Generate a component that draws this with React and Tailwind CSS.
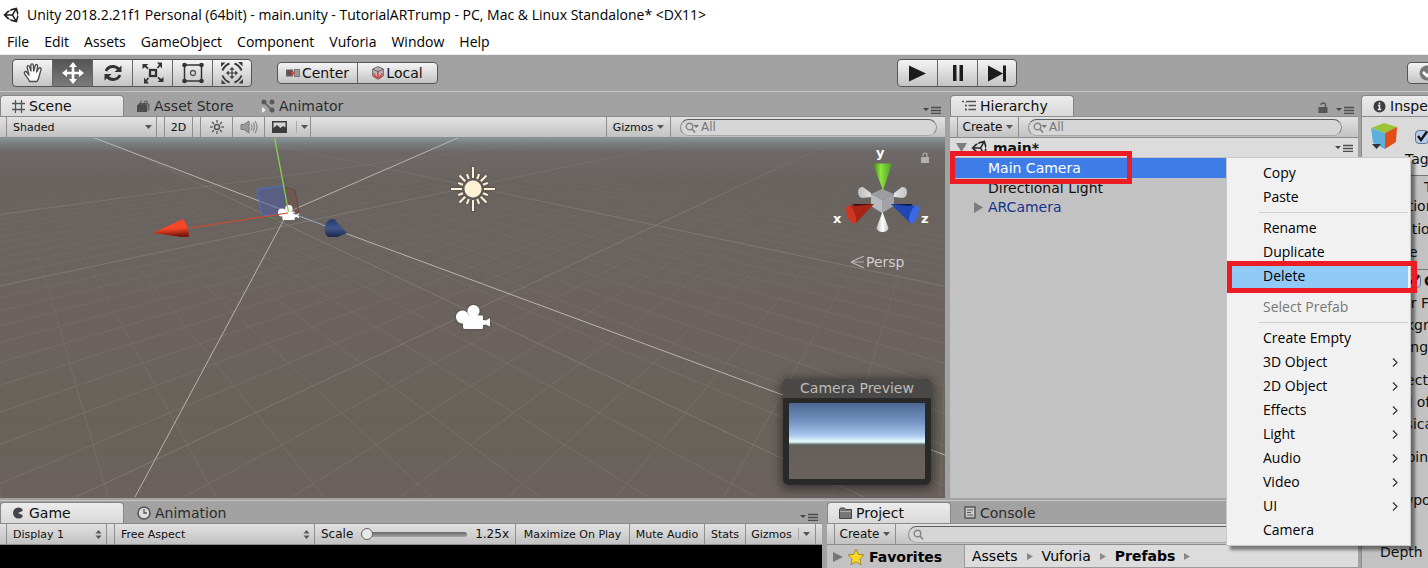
import React from 'react';
import { FaUnity } from 'react-icons/fa';

const UI = 'font-["DejaVu_Sans",Verdana,sans-serif]';

function Caret({ className = '' }) {
  return (
    <svg className={`h-1 w-[7px] shrink-0 ${className}`} viewBox="0 0 7 4" aria-hidden="true">
      <path d="M0 0h7L3.500 4z" fill="#555" />
    </svg>
  );
}

function PanelMenu({ className = '' }) {
  return (
    <button type="button" aria-label="Panel options" className={`flex shrink-0 ${className}`}>
      <svg width="18" height="8" viewBox="0 0 18 8">
        <path d="M0 2h6L3 5z" fill="#444" />
        <path d="M8 1.500h10M8 4.500h10M8 7.500h10" stroke="#4c4c4c" strokeWidth="1.300" />
      </svg>
    </button>
  );
}

function Lock({ className = '', color = '#555' }) {
  return (
    <svg className={className} width="10" height="11" viewBox="0 0 10 11" aria-hidden="true">
      <path d="M3 3V2.500Q3 1 5.200 1T7.500 3v3" fill="none" stroke={color} strokeWidth="1.300" />
      <rect x="0.500" y="5" width="9" height="6" fill={color} />
    </svg>
  );
}

function Tab({ active, icon, children }) {
  return (
    <button
      type="button"
      role="tab"
      aria-selected={!!active}
      className={`flex h-[21px] w-[124px] shrink-0 items-center gap-1 whitespace-nowrap text-left text-[14px] leading-none ${
        active
          ? 'rounded-t border border-b-0 border-[#868686] bg-gradient-to-b from-[#ececec] to-[#d9d9d9] pl-[11px] text-[#111]'
          : 'border-l border-transparent pl-3 text-[#2c2c2c]'
      }`}
    >
      {icon}
      {children}
    </button>
  );
}

function Strip({ children }) {
  return (
    <div className="flex h-[22px] shrink-0 items-stretch border-y border-[#8c8c8c] bg-gradient-to-b from-[#e2e2e2] to-[#c2c2c2] text-[11px] leading-none text-[#111]">
      {children}
    </div>
  );
}

const cell = 'flex shrink-0 items-center justify-center border-r border-[#8e8e8e] whitespace-nowrap';

function Search({ label, placeholder, className = '', arrow }) {
  return (
    <label className={`flex h-[17px] items-center gap-[2px] self-center rounded-full border border-t-[#5e5e5e] border-x-[#8a8a8a] border-b-[#a8a8a8] bg-[#d6d6d6] pl-1 ${className}`}>
      <svg width="14" height="11" viewBox="0 0 14 11" className="shrink-0" aria-hidden="true">
        <circle cx="4.500" cy="4.500" r="3.300" fill="none" stroke="#858585" strokeWidth="1.400" />
        <path d="M7 7l3 3.500" stroke="#858585" strokeWidth="1.700" />
        {arrow && <path d="M8.500 3H14l-2.750 3z" fill="#777" />}
      </svg>
      <input aria-label={label} placeholder={placeholder} className="mb-px w-full min-w-0 bg-transparent text-[12px] leading-none outline-none placeholder:text-[#777]" />
    </label>
  );
}

function Spinner() {
  return (
    <svg width="7" height="9" viewBox="0 0 7 9" className="pointer-events-none absolute right-1 top-[6px]" aria-hidden="true">
      <path d="M0.500 3.500L3.500 0l3 3.500zM0.500 5.500L3.500 9l3-3.500z" fill="#555" />
    </svg>
  );
}

function Popup({ label, value, className, spinner }) {
  return (
    <div className={`relative shrink-0 border-x border-[#8e8e8e] ${className}`}>
      <select aria-label={label} className="h-full w-full appearance-none bg-transparent pl-[6px] leading-none outline-none">
        <option>{value}</option>
      </select>
      {spinner ? <Spinner /> : <Caret className="pointer-events-none absolute right-1 top-2" />}
    </div>
  );
}

/* ---------- main toolbar ---------- */

const rotations = [0, 90, 180, 270];

const toolIcons = {
  Hand: (
    <path
      d="M7.500 19.500C6.500 16.500 3.500 14 2.500 11.500c-.8-2 1.300-2.800 2.600-1L7 13 5.200 5.500c-.5-2.200 1.800-2.600 2.300-.8L9 9 8.800 3.500c0-2.200 2.400-2.200 2.500 0L11.700 9l1.500-5.300c.6-1.900 2.700-1.300 2.400.6L14.600 10l2.200-3.500c1-1.600 2.900-.5 2.200 1.200-1.200 3-1.500 7.800-4 11.800z"
      fill="#fafafa" stroke="#4b4b4b" strokeWidth="1.300" strokeLinejoin="round"
    />
  ),
  Move: (
    <path d="M11 0l4 5h-2.700v4.700H17V7l5 4-5 4v-2.700h-4.700V17H15l-4 5-4-5h2.700v-4.700H5V15l-5-4 5-4v2.700h4.700V5H7z" fill="#fff" />
  ),
  Rotate: (
    <g fill="none" stroke="#333" strokeWidth="2.800">
      <path d="M4 9Q6 4.500 11 4.500q3.500 0 6 3" /><path d="M18 13q-2 4.500-7 4.500-3.500 0-6-3" />
      <path d="M19.500 3.500V10h-7zM2.500 18.500V12h7z" fill="#333" stroke="none" />
    </g>
  ),
  Scale: (
    <g fill="#333">
      <rect x="8" y="8" width="6" height="6" fill="none" stroke="#333" strokeWidth="2.300" />
      {rotations.map((r) => (
        <g key={r} transform={`rotate(${r} 11 11)`}><path d="M0.500 2h6l-6 5z" /><path d="M3 4l3 2.500" stroke="#333" strokeWidth="1.800" /></g>
      ))}
    </g>
  ),
  Rect: (
    <g fill="#333">
      <rect x="2.500" y="3" width="17" height="16" fill="none" stroke="#333" strokeWidth="1.500" />
      {[2.5, 19.5].map((x) => [3, 19].map((y) => <circle key={`${x}-${y}`} cx={x} cy={y} r="2.300" />))}
      <circle cx="11" cy="11" r="2.500" fill="none" stroke="#555" strokeWidth="1.300" />
    </g>
  ),
  Transform: (
    <g fill="#3a3a3a">
      {rotations.map((r) => (
        <g key={r} transform={`rotate(${r} 11 11)`}>
          <path d="M0 0.500h4.500L0 5z" />
          <path d="M1.500 8.500Q3.500 3.500 8.500 1.500" fill="none" stroke="#3a3a3a" strokeWidth="2" />
          <path d="M11 5l2.500 2.800h-5z" />
        </g>
      ))}
      <path d="M11 6v10M6 11h10" stroke="#3a3a3a" strokeWidth="1.200" />
    </g>
  ),
};

const groupBtn = 'flex h-full items-center justify-center border-r border-[#666] last:border-r-0';
const group = 'flex shrink-0 overflow-hidden rounded border border-[#555] bg-gradient-to-b from-[#f4f4f4] to-[#c4c4c4]';

function MainToolbar() {
  return (
    <div className="flex h-[38px] shrink-0 items-center overflow-hidden border-b border-t border-b-[#c4c4c4] border-t-[#ececec] bg-[#a2a2a2] pl-3">
      <div className={`${group} h-7`}>
        {Object.entries(toolIcons).map(([name, icon]) => (
          <button
            key={name}
            type="button"
            aria-label={`${name} tool`}
            className={`${groupBtn} w-10 last:w-[38px] ${name === 'Move' ? 'bg-gradient-to-b from-[#555] to-[#7b7b7b]' : ''}`}
          >
            <svg width="22" height="22" viewBox="0 0 22 22">{icon}</svg>
          </button>
        ))}
      </div>
      <div className={`${group} ml-[25px] h-[22px] text-[14px] leading-none text-[#111]`}>
        <button type="button" className={`${groupBtn} w-20`}>
          <svg width="14" height="8" viewBox="0 0 14 8" className="mr-[2px]">
            <rect x="0.500" y="1" width="6" height="6" fill="#6b4a4a" stroke="#666" /><rect x="8.500" y="0.500" width="5" height="7" fill="#999" stroke="#777" />
            <circle cx="7" cy="4" r="1.800" fill="#e0444c" />
          </svg>
          Center
        </button>
        <button type="button" className={`${groupBtn} w-[79px]`}>
          <svg width="12" height="14" viewBox="0 0 12 14" className="mr-[2px]">
            <path d="M6 0.700l5.300 2.300v7L6 13.300.7 10V3z" fill="#b5b5b5" stroke="#666" />
            <path d="M1 3.200l5 2.500 5-2.500" fill="none" stroke="#666" />
            <path d="M6 4.500V12M2 7.500q1 4 4 4.500 3-.5 4-4.500" fill="none" stroke="#d8434c" strokeWidth="1.600" />
          </svg>
          Local
        </button>
      </div>
      <div className={`${group} ml-auto mr-[390px] h-7`}>
        <button type="button" aria-label="Play" className={`${groupBtn} w-10`}>
          <svg width="18" height="17" viewBox="0 0 18 17"><path d="M0 0.500l17 8-17 8z" fill="#1c1c1c" /></svg>
        </button>
        <button type="button" aria-label="Pause" className={`${groupBtn} w-10`}>
          <svg width="12" height="16" viewBox="0 0 12 16"><path d="M1 0h3.500v16H1zM7.500 0H11v16H7.500z" fill="#1c1c1c" /></svg>
        </button>
        <button type="button" aria-label="Step" className={`${groupBtn} w-[38px]`}>
          <svg width="20" height="17" viewBox="0 0 20 17"><path d="M1 0.500l15 8-15 8zM16 0.500h3v16h-3z" fill="#1c1c1c" /></svg>
        </button>
      </div>
      <button type="button" aria-label="Collaborate" className={`${group} -mr-[39px] h-[22px] w-[60px] items-center pl-[11px]`}>
        <svg width="18" height="16" viewBox="0 0 18 16"><circle cx="8" cy="8" r="7.500" fill="#777" /><path d="M4 7l4 4 5-6" fill="none" stroke="#fff" strokeWidth="2.500" /></svg>
      </button>
    </div>
  );
}

/* ---------- scene ---------- */

const gridSteps = Array.from({ length: 46 }, (_, i) => i - 22);

function Camcorder({ x, y, s = 1 }) {
  return (
    <g transform={`translate(${x} ${y}) scale(${s})`} fill="#fdfdfd">
      <circle cx="17.500" cy="6" r="6" /><circle cx="6.500" cy="12" r="6.500" />
      <path d="M8 10.500h18q1 0 1 1V15l3 .5 4-2.500v8.500l-4-2-3 .5v2.500q0 1.500-1.500 1.500H9q-2 0-2-2V11z" />
    </g>
  );
}

function SceneDrawing() {
  return (
    <svg className="absolute left-0 top-0" width="1600" height="900" viewBox="0 138 1600 900" aria-hidden="true">
      <defs>
        <linearGradient id="fade" gradientUnits="userSpaceOnUse" x1="0" y1="137" x2="0" y2="400">
          <stop offset="0.030" stopColor="#a09c9a" stopOpacity="0" />
          <stop offset="0.400" stopColor="#a09c9a" stopOpacity="0.080" />
          <stop offset="1" stopColor="#a09c9a" stopOpacity="0.200" />
        </linearGradient>
        <linearGradient id="fadeMajor" gradientUnits="userSpaceOnUse" x1="0" y1="137" x2="0" y2="400">
          <stop offset="0" stopColor="#a8a4a0" stopOpacity="0.050" />
          <stop offset="0.300" stopColor="#a8a4a0" stopOpacity="0.300" />
          <stop offset="1" stopColor="#a8a4a0" stopOpacity="0.300" />
        </linearGradient>
        <linearGradient id="redCone" x1="0" y1="0" x2="0.150" y2="1">
          <stop offset="0.600" stopColor="#f74624" /><stop offset="1" stopColor="#7a190b" />
        </linearGradient>
        <linearGradient id="blueCone" x1="0" y1="0" x2="0" y2="1">
          <stop offset="0" stopColor="#24386a" /><stop offset="0.500" stopColor="#40588f" /><stop offset="1" stopColor="#1c2745" />
        </linearGradient>
        <filter id="halo" x="-30%" y="-30%" width="160%" height="160%">
          <feDropShadow dx="0" dy="0" stdDeviation="1.200" floodColor="#222" floodOpacity="0.600" />
        </filter>
      </defs>
      <g strokeWidth="1" fill="none">
        {gridSteps.map((k) => (
          <path key={`l${k}`} stroke={k % 10 === 0 ? 'url(#fadeMajor)' : 'url(#fade)'} d={`M955 85L${76 + k * 108} 497`} />
        ))}
        {gridSteps.map((k) => (
          <path key={`r${k}`} stroke={(k - 7) % 10 === 0 ? 'url(#fadeMajor)' : 'url(#fade)'} d={`M-10 85L${108 + k * 108} 497`} />
        ))}
      </g>
      <path d="M92 137L288 212L945 455M460 137L288 212L135 497" stroke="#c4c1bd" fill="none" opacity="0.850" />
      <path d="M257 189l27-3 5 27-27 3z" fill="#4c5aa8" fillOpacity="0.500" stroke="#4671c8" />
      <path d="M284 187l11 3 4 23-11-2z" fill="#70443f" fillOpacity="0.350" stroke="#7b4038" />
      <path d="M264 217l11 4 25-5" fill="none" stroke="#53702f" />
      <Camcorder x={278} y={205} s={0.62} />
      <path d="M274.500 137L288.500 212" stroke="#8bd148" strokeWidth="1.300" />
      <path d="M288 213L189 228" stroke="#ce4930" strokeWidth="1.200" />
      <path d="M293 213L347 234" stroke="#5a7ec4" strokeDasharray="3 2" />
      <path d="M153 233l30-14q6 8 6 18l-8 0z" fill="url(#redCone)" />
      <path d="M347 233l-13-14q-10 0-9 12 0 5 4 6h8z" fill="url(#blueCone)" />
      <g filter="url(#halo)">
        <circle cx="473" cy="189" r="8.500" fill="#fdf0d5" />
        <g stroke="#fdf0d5" strokeWidth="2">
          {Array.from({ length: 16 }, (_, i) => (
            <path key={i} d={i % 4 === 0 ? 'M473 178v-11' : i % 2 === 0 ? 'M473 178v-8' : 'M473 178v-5'} transform={`rotate(${i * 22.5} 473 189)`} />
          ))}
        </g>
      </g>
      <g filter="url(#halo)"><Camcorder x={456} y={305} /></g>
    </svg>
  );
}

function AxisGizmo() {
  return (
    <div className="absolute right-2 top-0 w-[110px] text-[#d0cfce]">
      <svg width="110" height="110" viewBox="827 138 110 110" role="img" aria-label="Scene orientation">
        <defs>
          <linearGradient id="gy"><stop offset="0" stopColor="#3e7c18" /><stop offset="0.400" stopColor="#8ce63e" /><stop offset="1" stopColor="#4f9a22" /></linearGradient>
          <linearGradient id="gw"><stop offset="0" stopColor="#bbb" /><stop offset="0.500" stopColor="#fff" /><stop offset="1" stopColor="#c4c4c4" /></linearGradient>
        </defs>
        <path d="M871 193l-8-6q-5 0-5 5 0 5 4 6l9-1zM894 193l8-6q5 0 5 5 0 5-4 6l-9-1z" fill="url(#gw)" />
        <path d="M882 189l12 5-12 6-11-6z" fill="#9b9da1" /><path d="M871 194l11 6v13l-11-7z" fill="#b9babd" /><path d="M894 194l-12 6v13l12-7z" fill="#a2a3a7" />
        <path d="M882.500 212l6 16q-1 4-6 4t-6-4z" fill="url(#gw)" />
        <path d="M873 163.500h19L883.500 189v2h-1v-2z" fill="url(#gy)" />
        <path d="M874 204h-18l-8 3 8 16z" fill="#a82417" /><path d="M874 204h-22l3 2z" fill="#45120c" /><ellipse cx="851" cy="214.500" rx="4" ry="9.500" transform="rotate(-20 851 214.500)" fill="#d13420" />
        <path d="M891 204h18l8 3-7 16z" fill="#1f46b2" /><path d="M891 204h22l-3 2z" fill="#0c1c4c" /><ellipse cx="914" cy="214.500" rx="4" ry="9.500" transform="rotate(20 914 214.500)" fill="#3a69e6" />
        <g fill="#fff" fontFamily="DejaVu Sans" fontWeight="bold" fontSize="13">
          <text x="876" y="157">y</text><text x="833" y="223">x</text><text x="921" y="223">z</text>
        </g>
        <g transform="translate(920 152)">
          <path d="M3 4V2.500Q3 1 5 1t2 2v3" fill="none" stroke="#b4b2b0" strokeWidth="1.200" /><rect x="1" y="5" width="8" height="6" fill="#b4b2b0" />
        </g>
      </svg>
      <button type="button" className="ml-6 mt-[6px] flex items-center gap-[2px] text-[14px] leading-4">
        <svg width="13" height="12" viewBox="0 0 13 12"><path d="M13 0L0 6l13 6M0 6h13" fill="none" stroke="#b5b3b1" strokeWidth="1.200" /></svg>
        Persp
      </button>
    </div>
  );
}

function ScenePanel() {
  return (
    <section className="flex min-w-0 flex-1 flex-col">
      <div className="flex h-[22px] shrink-0 items-end pr-1" role="tablist">
        <Tab active icon={<svg width="13" height="13" viewBox="0 0 13 13"><path d="M3.500 0v13M9.500 0v13M0 3.500h13M0 9.500h13" stroke="#555" strokeWidth="1.300" fill="none" /></svg>}>Scene</Tab>
        <Tab icon={<svg width="13" height="12" viewBox="0 0 13 12"><path d="M0 5h10v7H0z" fill="#4c4c4c" /><path d="M1 4.500l2-1h8l-1.500 1zM3 3.500Q3 1 5 1M7 3.500Q7 .5 10 1v2.500" fill="none" stroke="#555" /><path d="M10.500 4.500l2-1.500v6.500l-2 2z" fill="#666" /></svg>}>Asset Store</Tab>
        <Tab icon={<svg width="14" height="14" viewBox="0 0 14 14"><g fill="#5b5b5b"><circle cx="3" cy="3" r="2.500" /><circle cx="11" cy="3" r="2.500" /><circle cx="11" cy="11" r="2.500" /><path d="M3 3l8 8" stroke="#5b5b5b" strokeWidth="1.500" /></g><path d="M1 8l4 3-4 3z" fill="#eee" /></svg>}>Animator</Tab>
        <PanelMenu className="mb-[2px] ml-auto" />
      </div>
      <Strip>
        <Popup label="Draw mode" value="Shaded" className="ml-[6px] w-[151px]" />
        <button type="button" className={`${cell} ml-[7px] w-[29px] border-l`}>2D</button>
        <button type="button" aria-label="Scene lighting" className={`${cell} ml-[7px] w-[33px] border-l`}>
          <svg width="14" height="14" viewBox="0 0 14 14"><circle cx="7" cy="7" r="2.500" fill="none" stroke="#555" strokeWidth="1.500" />{[0, 45, 90, 135, 180, 225, 270, 315].map((a) => <path key={a} d="M7 0v2.800" stroke="#555" strokeWidth="1.300" transform={`rotate(${a} 7 7)`} />)}</svg>
        </button>
        <button type="button" aria-label="Audio" className={`${cell} w-8`}>
          <svg width="18" height="14" viewBox="0 0 18 14"><path d="M1 4.500h3L9 1v12L4 9.500H1z" fill="#999" stroke="#777" /><path d="M11 4q2 3 0 6M13 2.500q3 4.500 0 9M15 1q4 6 0 12" fill="none" stroke="#888" strokeWidth="1.200" /></svg>
        </button>
        <button type="button" aria-label="Effects" className={`${cell} w-[46px] gap-[9px] pl-1`}>
          <svg width="15" height="12" viewBox="0 0 15 12"><path d="M0 0h15v12H0z" fill="#3c3c3c" /><path d="M1.500 1.500h12v5L11 5 8.500 7 5 4 1.500 7z" fill="#d4d4d4" /></svg>
          <span className="flex h-3 items-center border-l border-[#aaa] pl-1"><Caret /></span>
        </button>
        <button type="button" className={`${cell} ml-auto w-[65px] gap-1 border-l`}>Gizmos<Caret /></button>
        <Search label="Search scene" placeholder="All" arrow className="ml-[9px] mr-2 w-[257px]" />
      </Strip>
      <div className="relative min-h-0 flex-1 overflow-hidden bg-[linear-gradient(180deg,#879599_0px,#777b7c_6px,#6d6867_14px,#69635f_45px,#6b625e_55%,#68635a_78%,#6b615d_100%)]">
        <SceneDrawing />
        <AxisGizmo />
        <figure className="absolute bottom-[13px] right-[14px] w-[148px] rounded-md bg-[#292929] p-[6px] pt-0 shadow-[0_2px_10px_3px_rgba(0,0,0,0.4)]">
          <figcaption className="-mx-[6px] mb-[5px] h-[19px] rounded-t-md bg-[#494846] text-center text-[14px] leading-[19px] text-[#bcbbb9]">Camera Preview</figcaption>
          <div className="h-[76px] bg-[linear-gradient(180deg,#4d6791_0%,#7594c4_25%,#a6c6ec_42%,#e4fcfc_51%,#5c615e_55%,#66605a_60%,#6b615c_100%)]" />
        </figure>
      </div>
    </section>
  );
}

/* ---------- hierarchy ---------- */

const menuItems = [
  'Copy', 'Paste', null, 'Rename', 'Duplicate', 'Delete', null, 'Select Prefab', null, 'Create Empty',
  '3D Object', '2D Object', 'Effects', 'Light', 'Audio', 'Video', 'UI', 'Camera',
];
const submenus = ['3D Object', '2D Object', 'Effects', 'Light', 'Audio', 'Video', 'UI'];

function ContextMenu() {
  return (
    <div role="menu" className='absolute left-[276px] top-[63px] z-20 w-[185px] border border-[#c8c8c8] bg-[#f1f1f1] px-[2px] py-[3px] font-["Open_Sans","Segoe_UI",sans-serif] text-[14px] text-black shadow-[4px_4px_3px_rgba(0,0,0,0.45)]'>
      {menuItems.map((item, i) =>
        item === null ? (
          <hr key={i} className="my-[3px] ml-[30px] border-t border-[#d0d0d0]" />
        ) : (
          <button
            key={i}
            type="button"
            role="menuitem"
            disabled={item === 'Select Prefab'}
            className={`relative flex h-6 w-full items-center justify-between pl-[34px] pr-[10px] text-left leading-none disabled:text-[#777] ${item === 'Delete' ? 'bg-[#91c9f7]' : ''}`}
          >
            {item}
            {submenus.includes(item) && (
              <svg width="6" height="9" viewBox="0 0 6 9"><path d="M1 0.500l4 4-4 4" fill="none" stroke="#333" strokeWidth="1.200" /></svg>
            )}
            {item === 'Delete' && <span className="pointer-events-none absolute -bottom-[5px] -left-[2px] -right-[9px] -top-[3px] border-[5px] border-[#ed1c24]" />}
          </button>
        ),
      )}
    </div>
  );
}

function HierarchyPanel() {
  return (
    <section className="relative flex w-[408px] shrink-0 flex-col">
      <div className="flex h-[22px] shrink-0 items-end pr-1" role="tablist">
        <Tab active icon={<svg width="14" height="12" viewBox="0 0 14 12"><path d="M0 1.500h2M4 1.500h10M3 5.500h2M6.500 5.500H14M3 9.500h2M6.500 9.500H14" stroke="#555" strokeWidth="1.300" fill="none" /><path d="M3.500 2v9" stroke="#999" strokeDasharray="1 1" /></svg>}>Hierarchy</Tab>
        <Lock className="mb-[3px] ml-auto mr-2" />
        <PanelMenu className="mb-[2px]" />
      </div>
      <Strip>
        <button type="button" className={`${cell} ml-[7px] w-[62px] gap-1 border-l text-[12px]`}>Create<Caret /></button>
        <Search label="Search hierarchy" placeholder="All" arrow className="ml-[9px] mr-4 flex-1" />
      </Strip>
      <div className="flex-1 bg-[#c2c2c2] text-[14px] leading-none text-[#111]">
        <div className="flex h-5 items-center gap-1 border-b border-[#c2c2c2] bg-[#dcdcdc] pl-[6px] pr-[5px] font-bold">
          <svg width="11" height="9" viewBox="0 0 11 9"><path d="M0 0h11L5.500 9z" fill="#7c7c7c" /></svg>
          <FaUnity size={18} color="#2a2a2a" />
          main*
          <PanelMenu className="ml-auto" />
        </div>
        <ul>
          <li className="relative flex h-5 items-center bg-[#3e7de7] pl-[38px] text-white">
            Main Camera
            <span className="absolute -top-[7px] left-0 z-10 h-[33px] w-[182px] border-[5px] border-[#ed1c24]" />
          </li>
          <li className="flex h-5 items-center pl-[38px]">Directional Light</li>
          <li className="flex h-[18px] items-center gap-[5px] pl-6 text-[#15318f]">
            <svg width="9" height="11" viewBox="0 0 9 11"><path d="M0 0v11l9-5.500z" fill="#7c7c7c" /></svg>
            ARCamera
          </li>
        </ul>
      </div>
      <ContextMenu />
    </section>
  );
}

/* ---------- lower panels ---------- */

function GamePanel() {
  return (
    <section className="flex min-w-0 flex-1 flex-col">
      <div className="flex h-[22px] shrink-0 items-end pr-1" role="tablist">
        <Tab active icon={<svg width="13" height="12" viewBox="0 0 13 12"><path d="M10.500 2Q9 0.500 6.500 .5a5.500 5.500 0 000 11Q9 11.500 10.500 10V8L6 6l4.500-2z" fill="#444" /></svg>}>Game</Tab>
        <Tab icon={<svg width="14" height="14" viewBox="0 0 14 14"><circle cx="7" cy="7" r="6" fill="#ddd" stroke="#555" strokeWidth="1.600" /><path d="M7 3v4h3" fill="none" stroke="#555" strokeWidth="1.300" /></svg>}>Animation</Tab>
        <PanelMenu className="mb-[2px] ml-auto" />
      </div>
      <Strip>
        <Popup label="Display" value="Display 1" spinner className="ml-[6px] w-[101px]" />
        <Popup label="Aspect" value="Free Aspect" spinner className="ml-[7px] w-[201px]" />
        <label className={`${cell} min-w-0 flex-1 gap-2 px-[6px] text-[12px]`}>
          Scale
          <input type="range" min="1" max="5" step="0.050" defaultValue="1" className="h-[5px] w-28 min-w-0 flex-1 appearance-none rounded-full bg-gradient-to-b from-[#6a6a6a] to-[#a5a5a5] [&::-webkit-slider-thumb]:h-3 [&::-webkit-slider-thumb]:w-3 [&::-webkit-slider-thumb]:appearance-none [&::-webkit-slider-thumb]:rounded-full [&::-webkit-slider-thumb]:border [&::-webkit-slider-thumb]:border-[#666] [&::-webkit-slider-thumb]:bg-[#e8e8e8]" />
          <output>1.25x</output>
        </label>
        <button type="button" className={`${cell} w-[114px]`}>Maximize On Play</button>
        <button type="button" className={`${cell} w-[75px]`}>Mute Audio</button>
        <button type="button" className={`${cell} w-[41px]`}>Stats</button>
        <button type="button" className={`${cell} mr-[6px] w-[70px] gap-[6px]`}>Gizmos<span className="flex h-3 items-center border-l border-[#aaa] pl-1"><Caret /></span></button>
      </Strip>
      <div className="flex-1 bg-black" />
    </section>
  );
}

function CrumbArrow() {
  return <svg width="6" height="7" viewBox="0 0 6 7"><path d="M0 0v7l6-3.500z" fill="#888" /></svg>;
}

function ProjectPanel() {
  return (
    <section className="flex w-[531px] shrink-0 flex-col">
      <div className="flex h-[22px] shrink-0 items-end" role="tablist">
        <Tab active icon={<svg width="13" height="12" viewBox="0 0 13 12"><path d="M.5 11.500v-9l1-1.500h4l1 1.500h6v9z" fill="#777" stroke="#444" /><path d="M1 4.500h11" stroke="#aaa" /></svg>}>Project</Tab>
        <Tab icon={<svg width="12" height="13" viewBox="0 0 12 13"><path d="M1 1h10v11H1z" fill="#ccc" stroke="#555" strokeWidth="1.500" /><path d="M3 4h6M3 6.500h4M3 9h6" stroke="#555" /></svg>}>Console</Tab>
      </div>
      <Strip>
        <button type="button" className={`${cell} ml-[7px] w-[62px] gap-1 border-l text-[12px]`}>Create<Caret /></button>
        <Search label="Search project" className="ml-3 flex-1" />
      </Strip>
      <div className="flex min-h-0 flex-1 bg-[#c2c2c2] text-[14px] leading-none text-black">
        <div className="flex h-6 w-[138px] items-center gap-1 border-r border-[#9a9a9a] pl-[6px] font-bold">
          <svg width="10" height="10" viewBox="0 0 10 10"><path d="M0 0v10l10-5z" fill="#777" /></svg>
          <svg width="18" height="18" viewBox="0 0 18 18"><path d="M9 1l2.400 5.300 5.600.7-4.200 3.900 1.200 5.800-5-2.900-5 2.900 1.200-5.800L1 7l5.600-.7z" fill="#ffd91f" stroke="#a38734" /></svg>
          Favorites
        </div>
        <nav className="flex h-[23px] flex-1 items-center gap-[9px] border-b border-[#9a9a9a] bg-[#dcdcdc] pl-[7px]">
          <a href="#assets">Assets</a><CrumbArrow /><a href="#vuforia">Vuforia</a><CrumbArrow /><a href="#prefabs" className="font-bold">Prefabs</a><CrumbArrow />
        </nav>
      </div>
    </section>
  );
}

/* ---------- inspector ---------- */

const fields = [
  ['Clear Flags', ''], ['Background', ''], ['Culling Mask', ''], ['Projection', 'mt-[11px]'], ['Field of View', ''],
  ['Physical Camera', ''], ['Clipping Planes', 'mt-[11px]'], ['Viewport Rect', 'mt-[21px]'], ['Depth', 'mt-[30px]'],
];

function Check({ label }) {
  return (
    <span className="relative flex h-[14px] w-[14px] shrink-0">
      <input type="checkbox" defaultChecked aria-label={label} className="h-[14px] w-[14px] appearance-none rounded-sm border border-[#5d7395] bg-[#b5cbe8]" />
      <svg className="pointer-events-none absolute left-[1px] top-0" width="13" height="12" viewBox="0 0 13 12"><path d="M2 6l3 4L11 1.500" fill="none" stroke="#111" strokeWidth="2.300" /></svg>
    </span>
  );
}

function InspectorPanel() {
  return (
    <aside className="flex w-[67px] shrink-0 flex-col overflow-hidden whitespace-nowrap">
      <div className="flex h-[22px] shrink-0 items-end" role="tablist">
        <Tab active icon={<svg width="13" height="13" viewBox="0 0 13 13"><circle cx="6.500" cy="6.500" r="6" fill="#3d3d3d" /><path d="M6.500 2.500v1.700M5 5.500h1.500v4M4.800 9.500h3.500" stroke="#eee" strokeWidth="1.500" fill="none" /></svg>}>Inspector</Tab>
      </div>
      <div className="w-[300px] flex-1 border-l border-t border-[#8c8c8c] bg-[#c2c2c2] text-[14px] leading-[22px] text-[#111]">
        <div className="h-[59px] border-b border-[#777] bg-[#dadada]">
          <div className="flex h-[31px] items-center pl-2 pt-2">
            <svg width="28" height="30" viewBox="0 0 28 30" className="mr-[17px] shrink-0">
              <path d="M1 6l13-5 13 4-12 6z" fill="#9cc43a" /><path d="M1 6l14 5v16L3 21z" fill="#5eb0dc" /><path d="M15 11l12-6-1 15-11 7z" fill="#e14e17" />
              <path d="M2 22h9l-4.500 5z" fill="#333" />
            </svg>
            <Check label="Active" />
          </div>
          <div className="pl-[43px]">Tag</div>
        </div>
        <div className="h-[94px] border-b border-[#777] pl-[18px] leading-[23px]">
          <div className="pl-[44px]">Transform</div>
          <div className="-mt-1">Position</div><div>Rotation</div><div>Scale</div>
        </div>
        <div className="flex h-[22px] items-center gap-[3px] pl-[45px] font-bold"><Check label="Camera enabled" />Camera</div>
        <div className="pl-[18px]">
          {fields.map(([name, gap]) => <div key={name} className={gap}>{name}</div>)}
        </div>
      </div>
    </aside>
  );
}

export default function App() {
  return (
    <div className={`flex h-screen flex-col overflow-hidden bg-[#a2a2a2] ${UI}`}>
      <header className='shrink-0 bg-white font-["Open_Sans","Segoe_UI",sans-serif] text-[14px] leading-none text-black'>
        <div className="flex h-[29px] items-center gap-[6px] pl-[3px]">
          <FaUnity size={18} color="#222" />
          <h1 className="whitespace-nowrap">Unity 2018.2.21f1 Personal (64bit) - main.unity - TutorialARTrump - PC, Mac &amp; Linux Standalone* &lt;DX11&gt;</h1>
        </div>
        <nav className="flex h-[25px] items-center gap-[15px] pl-[7px]">
          {['File', 'Edit', 'Assets', 'GameObject', 'Component', 'Vuforia', 'Window', 'Help'].map((m) => (
            <button key={m} type="button">{m}</button>
          ))}
        </nav>
      </header>
      <MainToolbar />
      <main className="flex min-h-0 flex-1 gap-[3px] pt-[2px]">
        <div className="flex min-w-0 flex-1 flex-col gap-[2px]">
          <div className="flex min-h-0 flex-1 gap-[5px]">
            <ScenePanel />
            <HierarchyPanel />
          </div>
          <div className="flex h-[68px] shrink-0 gap-[5px] border-t border-[#c4c4c4]">
            <GamePanel />
            <ProjectPanel />
          </div>
        </div>
        <InspectorPanel />
      </main>
    </div>
  );
}
